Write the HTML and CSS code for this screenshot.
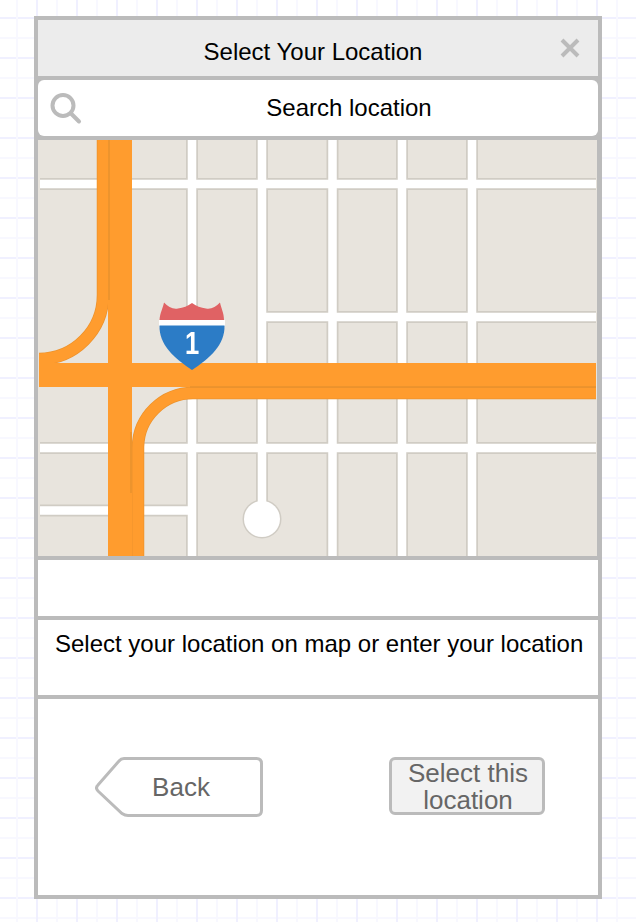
FILE: index.html
```html
<!DOCTYPE html>
<html lang="en">
<head>
<meta charset="utf-8">
<title>Select Your Location</title>
<link rel="stylesheet" href="styles.css">
</head>
<body>
<main class="frame">
  <header class="title-bar">
    <h1 class="title">Select Your Location</h1>
    <svg class="close-icon" viewBox="0 0 20 20" aria-hidden="true"><path d="M2 2 18 18M18 2 2 18"/></svg>
  </header>
  <div class="search">
    <svg class="search-icon" viewBox="0 0 36 36" aria-hidden="true"><circle cx="15" cy="14.500" r="10.500"/><path d="M23 22.500 31 30.500"/></svg>
    <span class="search-text">Search location</span>
  </div>
  <div class="map">
    <svg class="map-art" viewBox="38 140 559 416" aria-hidden="true">
      <rect class="ground" x="38" y="140" width="559" height="416"/>
      <path class="casing" d="M192 140V556M262 140V519M332.500 140V556M402 140V556M472 140V556M40 184H596M262 317H596M40 448H596M40 510.500H192"/>
      <circle class="casing-dot" cx="262" cy="519" r="19.500"/>
      <path class="street" d="M192 140V556M262 140V519M332.500 140V556M402 140V556M472 140V556M40 184H596M262 317H596M40 448H596M40 510.500H192"/>
      <circle class="street-dot" cx="262" cy="519" r="18"/>
      <path class="ramp-edge" d="M103 140V295A64 64 0 0 1 39 359M138 556V447A55 55 0 0 1 193 393H596"/>
      <path class="ramp" d="M103 140V295A64 64 0 0 1 39 359M138 556V447A55 55 0 0 1 193 393H596"/>
      <path class="highway" d="M120 140V556M39 375H596"/>
      <path class="lane" d="M109 140V300M131 432V493M190 387H596"/>
      <path class="shield-red" d="M164 302.500C168 307 173 309.500 178 308.500C183 308 188 306 192 303C196 306 201 308 206 308.500C211 309.500 216 307 220 302.500C221 308 224 313 224 320H159.500C160 313 163 308 164 302.500Z"/>
      <path class="shield-white" d="M159 320H225V326H159Z"/>
      <path class="shield-blue" d="M159.500 325.500H224.500C225 345 210 358 192 370C174 358 159 345 159.500 325.500Z"/>
      <text class="shield-num" transform="translate(192 354) scale(0.8 1)">1</text>
    </svg>
  </div>
  <div class="blank-row"></div>
  <p class="hint">Select your location on map or enter your location</p>
  <div class="actions">
    <button class="btn-back" type="button">
      <svg class="back-shape" viewBox="0 0 168 60" aria-hidden="true"><path d="M29 1.500H161.500Q166.500 1.500 166.500 6.500V53.500Q166.500 58.500 161.500 58.500H33Q30 58.500 27 56.500L3 34Q0 31 3 28L24 4Q26 1.500 29 1.500Z"/></svg>
      <span class="back-label">Back</span>
    </button>
    <button class="btn-select" type="button">Select this location</button>
  </div>
</main>
</body>
</html>
```

FILE: styles.css
```css
* {
  box-sizing: border-box;
}

html,
body {
  margin: 0;
  height: 922px;
  overflow: hidden;
}

body {
  padding: 16px 34px 0;
  font-family: "Liberation Sans", Arial, sans-serif;
  color: #000;
  background-color: #fff;
  background-image:
    linear-gradient(90deg, #f0f0ff 2px, transparent 2px),
    linear-gradient(90deg, #f8f8ff 2px, transparent 2px),
    linear-gradient(180deg, #f0f0ff 2px, transparent 2px),
    linear-gradient(180deg, #f8f8ff 2px, transparent 2px);
  background-size: 40px 40px;
  background-position: 36px 0, 16px 0, 0 17px, 0 37px;
}

.frame {
  width: 568px;
  height: 883px;
  display: flex;
  flex-direction: column;
  gap: 4px;
  border: 4px solid #bbbbbb;
  background: #bbbbbb;
}

.title-bar {
  flex: 0 0 56px;
  display: flex;
  align-items: center;
  justify-content: center;
  position: relative;
  padding: 7px 10px 0 0;
  background: #ececec;
}

.title {
  margin: 0;
  font-size: 24px;
  font-weight: 400;
}

.close-icon {
  position: absolute;
  right: 18px;
  top: 18px;
  width: 20px;
  height: 20px;
  fill: none;
  stroke: #bbbbbb;
  stroke-width: 4;
}

.search {
  flex: 0 0 56px;
  display: flex;
  align-items: center;
  justify-content: center;
  position: relative;
  padding-left: 62px;
  border-radius: 6px;
  background: #fff;
  font-size: 24px;
}

.search-icon {
  position: absolute;
  left: 10px;
  top: 11px;
  width: 36px;
  height: 36px;
  fill: none;
  stroke: #bbbbbb;
  stroke-width: 4;
  stroke-linecap: round;
}

.map {
  flex: 0 0 416px;
  background: #bbbbbb;
}

.map-art {
  display: block;
  width: 559px;
  height: 416px;
  filter: blur(0.4px);
}

.ground {
  fill: #e8e4dd;
}

.casing,
.street,
.ramp,
.ramp-edge,
.highway,
.lane {
  fill: none;
}

.casing {
  stroke: #d0ccc4;
  stroke-width: 12;
}

.street {
  stroke: #fff;
  stroke-width: 8.500;
}

.casing-dot {
  fill: #d0ccc4;
}

.street-dot {
  fill: #fff;
}

.ramp-edge {
  stroke: #ec922c;
  stroke-width: 12.500;
}

.ramp {
  stroke: #ff9c2e;
  stroke-width: 11;
}

.highway {
  stroke: #ff9c2e;
  stroke-width: 24;
}

.lane {
  stroke: #e8912e;
  stroke-width: 1.500;
}

.shield-red {
  fill: #e06264;
}

.shield-white {
  fill: #fff;
}

.shield-blue {
  fill: #2c7cc6;
}

.shield-num {
  fill: #fff;
  font-family: "Liberation Sans", Arial, sans-serif;
  font-size: 32px;
  font-weight: 700;
  text-anchor: middle;
}

.blank-row {
  flex: 0 0 56px;
  background: #fff;
}

.hint {
  flex: 0 0 75px;
  margin: 0;
  padding: 11px 0 0 17px;
  background: #fff;
  font-size: 24px;
  line-height: 26px;
  white-space: nowrap;
}

.actions {
  flex: 1;
  display: flex;
  align-items: flex-start;
  justify-content: space-between;
  padding: 58px 53px 0 57px;
  background: #fff;
}

.btn-back,
.btn-select {
  margin: 0;
  border: 0;
  font-family: inherit;
  font-size: 26px;
  color: #666666;
}

.btn-back {
  width: 168px;
  height: 60px;
  position: relative;
  padding: 0 0 0 4px;
  background: transparent;
}

.back-shape {
  position: absolute;
  left: 0;
  top: 0;
  width: 168px;
  height: 60px;
  fill: #fff;
  stroke: #bbbbbb;
  stroke-width: 3;
}

.back-label {
  position: relative;
}

.btn-select {
  width: 156px;
  height: 58px;
  padding: 0 8px 0 10px;
  border: 3px solid #bbbbbb;
  border-radius: 6px;
  background: #f2f2f2;
  line-height: 27px;
}
```
